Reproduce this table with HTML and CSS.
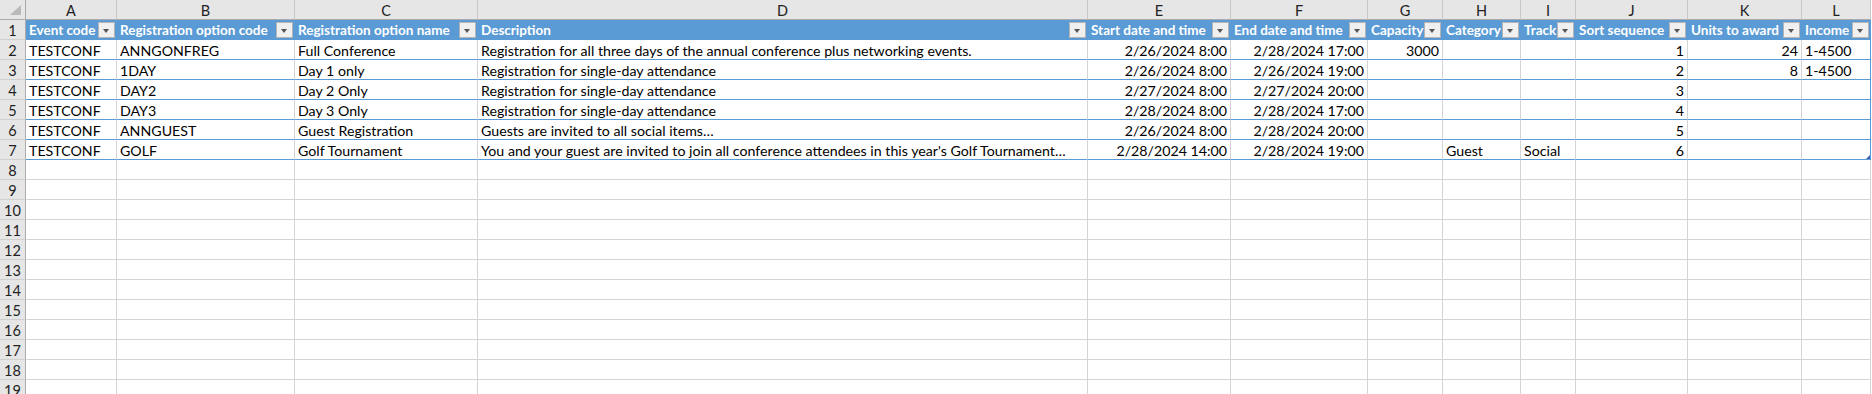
FILE: index.html
```html
<!DOCTYPE html>
<html>
<head>
<meta charset="utf-8">
<link rel="stylesheet" href="styles.css">
</head>
<body>
<div class="sheet">
  <div class="row colhdr">
    <div class="c corner"><span class="tri"></span></div>
    <div class="c">A</div><div class="c">B</div><div class="c">C</div><div class="c">D</div><div class="c">E</div><div class="c">F</div><div class="c">G</div><div class="c">H</div><div class="c">I</div><div class="c">J</div><div class="c">K</div><div class="c">L</div>
  </div>
  <div class="row thead">
    <div class="c rn">1</div>
    <div class="c th"><span>Event code</span><i class="dd"></i></div>
    <div class="c th"><span>Registration option code</span><i class="dd"></i></div>
    <div class="c th"><span>Registration option name</span><i class="dd"></i></div>
    <div class="c th"><span>Description</span><i class="dd"></i></div>
    <div class="c th"><span>Start date and time</span><i class="dd"></i></div>
    <div class="c th"><span>End date and time</span><i class="dd"></i></div>
    <div class="c th"><span>Capacity</span><i class="dd"></i></div>
    <div class="c th"><span>Category</span><i class="dd"></i></div>
    <div class="c th"><span>Track</span><i class="dd"></i></div>
    <div class="c th"><span>Sort sequence</span><i class="dd"></i></div>
    <div class="c th"><span>Units to award</span><i class="dd"></i></div>
    <div class="c th last"><span>Income</span><i class="dd"></i></div>
  </div>
  <div class="row trow">
    <div class="c rn">2</div>
    <div class="c">TESTCONF</div><div class="c">ANNGONFREG</div><div class="c">Full Conference</div>
    <div class="c">Registration for all three days of the annual conference plus networking events.</div>
    <div class="c r">2/26/2024 8:00</div><div class="c r">2/28/2024 17:00</div><div class="c r">3000</div>
    <div class="c"></div><div class="c"></div><div class="c r">1</div><div class="c r">24</div><div class="c last">1-4500</div>
  </div>
  <div class="row trow">
    <div class="c rn">3</div>
    <div class="c">TESTCONF</div><div class="c">1DAY</div><div class="c">Day 1 only</div>
    <div class="c">Registration for single-day attendance</div>
    <div class="c r">2/26/2024 8:00</div><div class="c r">2/26/2024 19:00</div><div class="c r"></div>
    <div class="c"></div><div class="c"></div><div class="c r">2</div><div class="c r">8</div><div class="c last">1-4500</div>
  </div>
  <div class="row trow">
    <div class="c rn">4</div>
    <div class="c">TESTCONF</div><div class="c">DAY2</div><div class="c">Day 2 Only</div>
    <div class="c">Registration for single-day attendance</div>
    <div class="c r">2/27/2024 8:00</div><div class="c r">2/27/2024 20:00</div><div class="c r"></div>
    <div class="c"></div><div class="c"></div><div class="c r">3</div><div class="c r"></div><div class="c last"></div>
  </div>
  <div class="row trow">
    <div class="c rn">5</div>
    <div class="c">TESTCONF</div><div class="c">DAY3</div><div class="c">Day 3 Only</div>
    <div class="c">Registration for single-day attendance</div>
    <div class="c r">2/28/2024 8:00</div><div class="c r">2/28/2024 17:00</div><div class="c r"></div>
    <div class="c"></div><div class="c"></div><div class="c r">4</div><div class="c r"></div><div class="c last"></div>
  </div>
  <div class="row trow">
    <div class="c rn">6</div>
    <div class="c">TESTCONF</div><div class="c">ANNGUEST</div><div class="c">Guest Registration</div>
    <div class="c">Guests are invited to all social items…</div>
    <div class="c r">2/26/2024 8:00</div><div class="c r">2/28/2024 20:00</div><div class="c r"></div>
    <div class="c"></div><div class="c"></div><div class="c r">5</div><div class="c r"></div><div class="c last"></div>
  </div>
  <div class="row trow">
    <div class="c rn">7</div>
    <div class="c">TESTCONF</div><div class="c">GOLF</div><div class="c">Golf Tournament</div>
    <div class="c">You and your guest are invited to join all conference attendees in this year's Golf Tournament…</div>
    <div class="c r">2/28/2024 14:00</div><div class="c r">2/28/2024 19:00</div><div class="c r"></div>
    <div class="c">Guest</div><div class="c">Social</div><div class="c r">6</div><div class="c r"></div><div class="c last"><i class="handle"></i></div>
  </div>
  <div class="row"><div class="c rn">8</div><div class="c"></div><div class="c"></div><div class="c"></div><div class="c"></div><div class="c"></div><div class="c"></div><div class="c"></div><div class="c"></div><div class="c"></div><div class="c"></div><div class="c"></div><div class="c"></div></div>
  <div class="row"><div class="c rn">9</div><div class="c"></div><div class="c"></div><div class="c"></div><div class="c"></div><div class="c"></div><div class="c"></div><div class="c"></div><div class="c"></div><div class="c"></div><div class="c"></div><div class="c"></div><div class="c"></div></div>
  <div class="row"><div class="c rn">10</div><div class="c"></div><div class="c"></div><div class="c"></div><div class="c"></div><div class="c"></div><div class="c"></div><div class="c"></div><div class="c"></div><div class="c"></div><div class="c"></div><div class="c"></div><div class="c"></div></div>
  <div class="row"><div class="c rn">11</div><div class="c"></div><div class="c"></div><div class="c"></div><div class="c"></div><div class="c"></div><div class="c"></div><div class="c"></div><div class="c"></div><div class="c"></div><div class="c"></div><div class="c"></div><div class="c"></div></div>
  <div class="row"><div class="c rn">12</div><div class="c"></div><div class="c"></div><div class="c"></div><div class="c"></div><div class="c"></div><div class="c"></div><div class="c"></div><div class="c"></div><div class="c"></div><div class="c"></div><div class="c"></div><div class="c"></div></div>
  <div class="row"><div class="c rn">13</div><div class="c"></div><div class="c"></div><div class="c"></div><div class="c"></div><div class="c"></div><div class="c"></div><div class="c"></div><div class="c"></div><div class="c"></div><div class="c"></div><div class="c"></div><div class="c"></div></div>
  <div class="row"><div class="c rn">14</div><div class="c"></div><div class="c"></div><div class="c"></div><div class="c"></div><div class="c"></div><div class="c"></div><div class="c"></div><div class="c"></div><div class="c"></div><div class="c"></div><div class="c"></div><div class="c"></div></div>
  <div class="row"><div class="c rn">15</div><div class="c"></div><div class="c"></div><div class="c"></div><div class="c"></div><div class="c"></div><div class="c"></div><div class="c"></div><div class="c"></div><div class="c"></div><div class="c"></div><div class="c"></div><div class="c"></div></div>
  <div class="row"><div class="c rn">16</div><div class="c"></div><div class="c"></div><div class="c"></div><div class="c"></div><div class="c"></div><div class="c"></div><div class="c"></div><div class="c"></div><div class="c"></div><div class="c"></div><div class="c"></div><div class="c"></div></div>
  <div class="row"><div class="c rn">17</div><div class="c"></div><div class="c"></div><div class="c"></div><div class="c"></div><div class="c"></div><div class="c"></div><div class="c"></div><div class="c"></div><div class="c"></div><div class="c"></div><div class="c"></div><div class="c"></div></div>
  <div class="row"><div class="c rn">18</div><div class="c"></div><div class="c"></div><div class="c"></div><div class="c"></div><div class="c"></div><div class="c"></div><div class="c"></div><div class="c"></div><div class="c"></div><div class="c"></div><div class="c"></div><div class="c"></div></div>
  <div class="row"><div class="c rn">19</div><div class="c"></div><div class="c"></div><div class="c"></div><div class="c"></div><div class="c"></div><div class="c"></div><div class="c"></div><div class="c"></div><div class="c"></div><div class="c"></div><div class="c"></div><div class="c"></div></div>
</div>
</body>
</html>
```

FILE: styles.css
```css
html, body {
  margin: 0;
  padding: 0;
  background: #ffffff;
  overflow: hidden;
}
body {
  font-family: Lato, "Liberation Sans", sans-serif;
  font-size: 14.2px;
  color: #000000;
}
.sheet {
  width: 1872px;
}
.row {
  display: grid;
  grid-template-columns: 26px 91px 178px 183px 610px 143px 137px 75px 78px 55px 112px 114px 69px;
  height: 20px;
}
.c {
  box-sizing: border-box;
  height: 20px;
  border-right: 1px solid #d4d4d4;
  border-bottom: 1px solid #d4d4d4;
  padding: 2px 2px 0 3px;
  line-height: 17px;
  white-space: nowrap;
  overflow: hidden;
  position: relative;
}
.r {
  text-align: right;
  padding-right: 3px;
}
.colhdr .c {
  background: #e6e6e6;
  color: #222222;
  text-align: center;
  border-bottom: 1px solid #ababab;
  border-right: 1px solid #c8c8c8;
  padding-left: 0;
  padding-right: 0;
  font-size: 14.5px;
}
.corner {
  border-right-color: #ababab !important;
}
.tri {
  position: absolute;
  right: 4px;
  bottom: 4px;
  width: 0;
  height: 0;
  border-left: 11px solid transparent;
  border-bottom: 10px solid #b9b9b9;
}
.rn {
  background: #e6e6e6;
  color: #222222;
  text-align: center;
  padding-left: 0;
  padding-right: 0;
  border-right: 1px solid #ababab;
  border-bottom: 1px solid #d0d0d0;
  font-size: 14.5px;
}
.thead .th {
  background: #5b9bd5;
  color: #ffffff;
  font-weight: bold;
  font-size: 13.5px;
  border-right-color: #5b9bd5;
  border-bottom-color: #5b9bd5;
  padding-right: 0;
}
.th span {
  display: block;
  overflow: hidden;
}
.dd {
  position: absolute;
  right: 1px;
  top: 2px;
  width: 15px;
  height: 14px;
  background: #f0f0f0;
  border: 1px solid #b4b4b4;
}
.dd::after {
  content: "";
  position: absolute;
  left: 4px;
  top: 6px;
  width: 0;
  height: 0;
  border-left: 3.5px solid transparent;
  border-right: 3.5px solid transparent;
  border-top: 4px solid #555555;
}
.trow .c:not(.rn) {
  border-bottom-color: #5b9bd5;
}
.trow .last {
  border-right-color: #5b9bd5;
}
.handle {
  position: absolute;
  right: 0;
  bottom: 0;
  width: 0;
  height: 0;
  border-left: 4px solid transparent;
  border-bottom: 4px solid #3c5fb0;
}
```
